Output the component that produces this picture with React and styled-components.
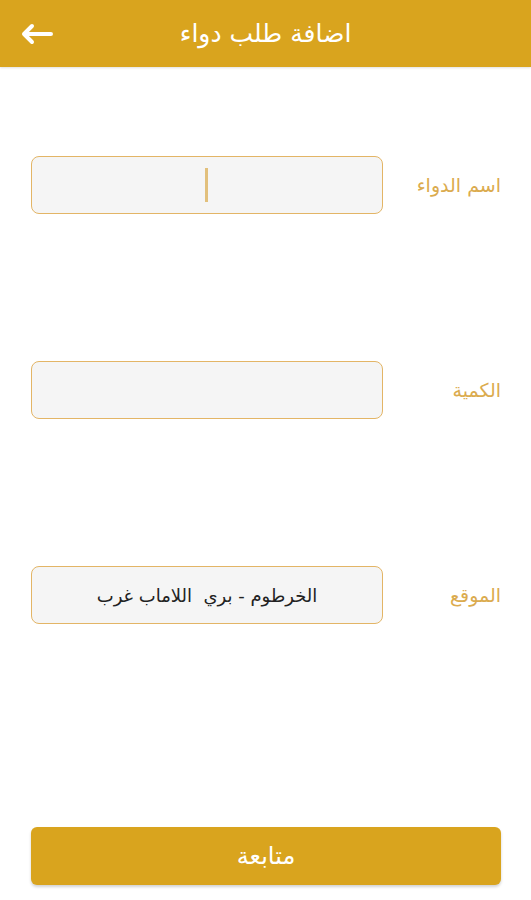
import React from "react";
import styled, { createGlobalStyle } from "styled-components";

const Global = createGlobalStyle`
  html, body { margin: 0; padding: 0; background: #ffffff; }
  body { font-family: "DejaVu Sans", "Noto Sans", sans-serif; }
  * { box-sizing: border-box; }
`;

const Page = styled.div`
  width: 531px;
  height: 900px;
  display: flex;
  flex-direction: column;
  background: #ffffff;
`;

const Header = styled.header`
  height: 67px;
  background: #d9a41e;
  display: grid;
  grid-template-columns: 80px 1fr 80px;
  align-items: center;
  box-shadow: 0 1px 2px rgba(0, 0, 0, 0.12);
`;

const BackButton = styled.button`
  border: 0;
  background: transparent;
  padding: 0 0 0 20px;
  height: 40px;
  display: flex;
  align-items: center;
  cursor: pointer;
`;

const Title = styled.h1`
  margin: 0;
  text-align: center;
  color: #ffffff;
  font-size: 25px;
  font-weight: 400;
  direction: rtl;
`;

const Form = styled.div`
  display: flex;
  flex-direction: column;
  gap: 147px;
  padding: 89px 30px 0 31px;
`;

const Row = styled.div`
  display: flex;
  align-items: center;
`;

const Field = styled.div`
  width: 352px;
  height: 58px;
  background: #f5f5f5;
  border: 1.5px solid #e3b566;
  border-radius: 8px;
  display: flex;
  align-items: center;
  justify-content: center;
  direction: rtl;
  font-size: 18px;
  color: #222222;
`;

const Caret = styled.span`
  width: 3px;
  height: 34px;
  background: #e2c07c;
  margin-right: 2px;
`;

const Label = styled.label`
  flex: 1;
  text-align: right;
  direction: rtl;
  color: #dbab4e;
  font-size: 19px;
`;

const Footer = styled.div`
  margin-top: auto;
  padding: 0 30px 15px 31px;
`;

const SubmitButton = styled.button`
  width: 470px;
  height: 58px;
  border: 0;
  border-radius: 6px;
  background: #d9a41e;
  color: #ffffff;
  font-family: "DejaVu Sans", "Noto Sans", sans-serif;
  font-size: 24px;
  direction: rtl;
  box-shadow: 0 2px 3px rgba(0, 0, 0, 0.18);
  cursor: pointer;
`;

const ArrowIcon = () => (
  <svg width="34" height="22" viewBox="0 0 34 22" fill="none">
    <path
      d="M31 11H4M12 3L4 11L12 19"
      stroke="#ffffff"
      strokeWidth="4"
      strokeLinecap="round"
      strokeLinejoin="round"
    />
  </svg>
);

export default function App() {
  return (
    <Page>
      <Global />
      <Header>
        <BackButton aria-label="back">
          <ArrowIcon />
        </BackButton>
        <Title>اضافة طلب دواء</Title>
        <span />
      </Header>
      <Form>
        <Row>
          <Field>
            <Caret />
          </Field>
          <Label>اسم الدواء</Label>
        </Row>
        <Row>
          <Field />
          <Label>الكمية</Label>
        </Row>
        <Row>
          <Field>الخرطوم - بري&nbsp;&nbsp;اللاماب غرب</Field>
          <Label>الموقع</Label>
        </Row>
      </Form>
      <Footer>
        <SubmitButton>متابعة</SubmitButton>
      </Footer>
    </Page>
  );
}
